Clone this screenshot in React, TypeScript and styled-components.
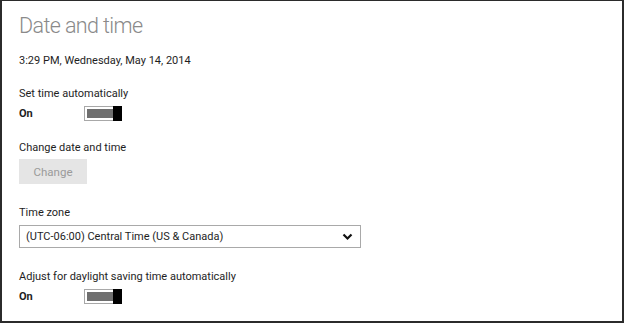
import styled, { createGlobalStyle } from "styled-components";

const Global = createGlobalStyle`
  html, body {
    margin: 0;
    padding: 0;
    background: #fff;
  }
  body {
    font-family: Roboto, "Open Sans", sans-serif;
    color: #1e1e1e;
  }
`;

const Frame = styled.div`
  box-sizing: border-box;
  width: 624px;
  height: 323px;
  border-style: solid;
  border-color: #2b2b2b;
  border-width: 1px 2px 2px 2px;
  padding: 12px 0 0 17px;
  display: flex;
  flex-direction: column;
  overflow: hidden;
`;

const Title = styled.h1`
  margin: 0;
  font-size: 21.5px;
  font-weight: 300;
  letter-spacing: -0.6px;
  color: #8a8a8a;
  line-height: 26px;
`;

const Now = styled.div`
  margin-top: 14px;
  font-size: 11px;
  line-height: 16px;
`;

const Group = styled.div<{ $gap: number }>`
  margin-top: ${(p) => p.$gap}px;
  display: flex;
  flex-direction: column;
`;

const Label = styled.div`
  font-size: 11px;
  line-height: 16px;
`;

const ToggleRow = styled.div`
  display: flex;
  align-items: center;
  height: 18px;
  margin-top: 2px;
`;

const State = styled.span`
  width: 65px;
  font-size: 11px;
  font-weight: 700;
`;

const Toggle = styled.div`
  box-sizing: border-box;
  width: 38px;
  height: 15px;
  border: 1px solid #a8a8a8;
  padding: 2px 0 2px 2px;
  display: flex;
  background: #fff;
`;

const Fill = styled.div`
  flex: 1;
  background: #6f6f6f;
`;

const Thumb = styled.div`
  width: 9px;
  margin: -3px -1px -3px 0;
  background: #000;
`;

const ChangeButton = styled.button`
  margin-top: 3px;
  width: 68px;
  height: 25px;
  border: none;
  background: #e5e5e5;
  color: #9a9a9a;
  font-family: inherit;
  font-size: 11.5px;
  padding: 0;
`;

const Select = styled.div`
  box-sizing: border-box;
  margin-top: 4px;
  width: 342px;
  height: 23px;
  border: 1px solid #a9a9a9;
  display: flex;
  align-items: center;
  justify-content: space-between;
  padding: 0 7px 0 6px;
  font-size: 11px;
`;

const Switch = () => (
  <ToggleRow>
    <State>On</State>
    <Toggle>
      <Fill />
      <Thumb />
    </Toggle>
  </ToggleRow>
);

export default function App() {
  return (
    <>
      <Global />
      <Frame>
        <Title>Date and time</Title>
        <Now>3:29 PM, Wednesday, May 14, 2014</Now>
        <Group $gap={17}>
          <Label>Set time automatically</Label>
          <Switch />
        </Group>
        <Group $gap={18}>
          <Label>Change date and time</Label>
          <ChangeButton>Change</ChangeButton>
        </Group>
        <Group $gap={21}>
          <Label>Time zone</Label>
          <Select>
            <span>(UTC-06:00) Central Time (US &amp; Canada)</span>
            <svg width="11" height="8" viewBox="0 0 11 8">
              <path d="M1.5 1.5 L5.5 5.5 L9.5 1.5" fill="none" stroke="#111" strokeWidth="2.2" />
            </svg>
          </Select>
        </Group>
        <Group $gap={21}>
          <Label>Adjust for daylight saving time automatically</Label>
          <Switch />
        </Group>
      </Frame>
    </>
  );
}
